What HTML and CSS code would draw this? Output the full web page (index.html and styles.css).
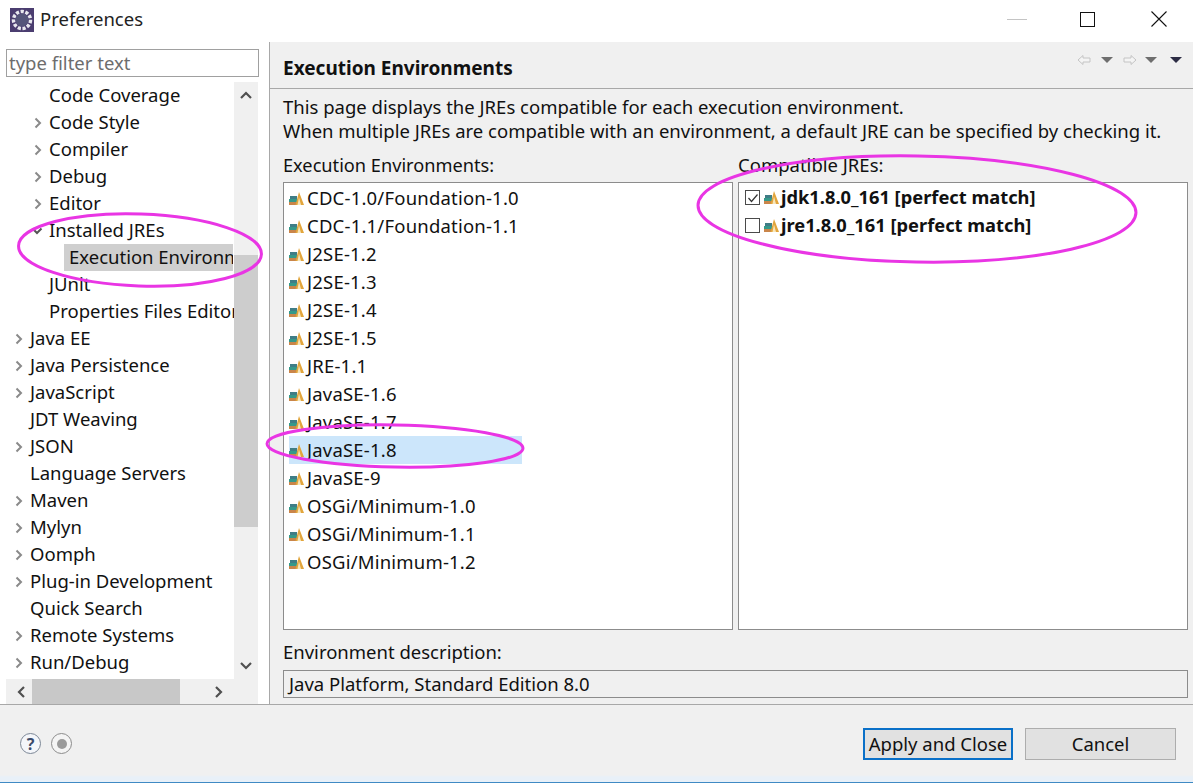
FILE: index.html
```html
<!DOCTYPE html>
<html lang="en">
<head>
<meta charset="utf-8">
<title>Preferences</title>
<link rel="stylesheet" href="styles.css">
</head>
<body>
<svg width="0" height="0" class="defs">
  <defs>
    <symbol id="jre" viewBox="0 0 15 13">
      <rect x="0" y="10" width="9" height="3" fill="#c9854a"/>
      <rect x="0" y="7" width="9" height="3" fill="#35998a"/>
      <rect x="1" y="4" width="7" height="3" fill="#3f7d86"/>
      <path d="M10 0 L15 13 H6.500 Z" fill="#e2a53c"/>
      <path d="M10 5.500 L12 13 H8.500 Z" fill="#f7e7bd"/>
    </symbol>
    <symbol id="chev-r" viewBox="0 0 8 12"><path d="M1.500 1.500 L6 6 L1.500 10.500" fill="none" stroke="#8a8a8a" stroke-width="2"/></symbol>
  </defs>
</svg>
<div class="window">
  <header class="titlebar">
    <svg class="app-icon" viewBox="0 0 24 24" width="24" height="24">
      <rect width="24" height="24" fill="#4b3d70"/>
      <circle cx="12" cy="12" r="8.500" fill="none" stroke="#e8e8ee" stroke-width="3.500" stroke-dasharray="3.200 1.600"/>
      <circle cx="12" cy="12" r="6.500" fill="#55557a"/>
    </svg>
    <span class="title">Preferences</span>
    <div class="win-controls">
      <span class="win-min"></span>
      <span class="win-max"></span>
      <svg class="win-close" viewBox="0 0 16 16" width="16" height="16"><path d="M0.500 0.500 L15.500 15.500 M15.500 0.500 L0.500 15.500" stroke="#111" stroke-width="1.100"/></svg>
    </div>
  </header>

  <div class="main">
    <aside class="sidebar">
      <input class="filter" type="text" placeholder="type filter text">
      <div class="tree-wrap">
        <div class="tree">
          <div class="row l1">Code Coverage</div>
          <div class="row l1 has"><svg class="chev"><use href="#chev-r"/></svg>Code Style</div>
          <div class="row l1 has"><svg class="chev"><use href="#chev-r"/></svg>Compiler</div>
          <div class="row l1 has"><svg class="chev"><use href="#chev-r"/></svg>Debug</div>
          <div class="row l1 has"><svg class="chev"><use href="#chev-r"/></svg>Editor</div>
          <div class="row l1 has"><svg class="chev open" viewBox="0 0 12 8"><path d="M1.500 1.500 L6 6 L10.500 1.500" fill="none" stroke="#555" stroke-width="2"/></svg>Installed JREs</div>
          <div class="row l2"><span class="sel">Execution Environments</span></div>
          <div class="row l1">JUnit</div>
          <div class="row l1">Properties Files Editor</div>
          <div class="row l0 has"><svg class="chev"><use href="#chev-r"/></svg>Java EE</div>
          <div class="row l0 has"><svg class="chev"><use href="#chev-r"/></svg>Java Persistence</div>
          <div class="row l0 has"><svg class="chev"><use href="#chev-r"/></svg>JavaScript</div>
          <div class="row l0">JDT Weaving</div>
          <div class="row l0 has"><svg class="chev"><use href="#chev-r"/></svg>JSON</div>
          <div class="row l0">Language Servers</div>
          <div class="row l0 has"><svg class="chev"><use href="#chev-r"/></svg>Maven</div>
          <div class="row l0 has"><svg class="chev"><use href="#chev-r"/></svg>Mylyn</div>
          <div class="row l0 has"><svg class="chev"><use href="#chev-r"/></svg>Oomph</div>
          <div class="row l0 has"><svg class="chev"><use href="#chev-r"/></svg>Plug-in Development</div>
          <div class="row l0">Quick Search</div>
          <div class="row l0 has"><svg class="chev"><use href="#chev-r"/></svg>Remote Systems</div>
          <div class="row l0 has"><svg class="chev"><use href="#chev-r"/></svg>Run/Debug</div>
        </div>
        <div class="vscroll">
          <svg class="sb-arrow" viewBox="0 0 12 8" width="12" height="8"><path d="M1 7 L6 2 L11 7" fill="none" stroke="#505050" stroke-width="2.200"/></svg>
          <div class="vtrack"><div class="vthumb"></div></div>
          <svg class="sb-arrow" viewBox="0 0 12 8" width="12" height="8"><path d="M1 1 L6 6 L11 1" fill="none" stroke="#505050" stroke-width="2.200"/></svg>
        </div>
      </div>
      <div class="hscroll">
        <svg class="sb-arrow-h" viewBox="0 0 8 12" width="8" height="12"><path d="M7 1 L2 6 L7 11" fill="none" stroke="#505050" stroke-width="2.200"/></svg>
        <div class="hthumb"></div>
        <svg class="sb-arrow-h right" viewBox="0 0 8 12" width="8" height="12"><path d="M1 1 L6 6 L1 11" fill="none" stroke="#505050" stroke-width="2.200"/></svg>
      </div>
    </aside>

    <section class="pane">
      <div class="pane-head">
        <h1>Execution Environments</h1>
        <div class="nav-icons">
          <svg viewBox="0 0 14 12" width="14" height="12"><path d="M1 6 L6 1.500 V4 H13 V8 H6 V10.500 Z" fill="#f4f4f4" stroke="#c4c4c4"/></svg>
          <span class="tri"></span>
          <svg viewBox="0 0 14 12" width="14" height="12"><path d="M13 6 L8 1.500 V4 H1 V8 H8 V10.500 Z" fill="#f4f4f4" stroke="#c4c4c4"/></svg>
          <span class="tri tight"></span>
          <span class="tri dark"></span>
        </div>
      </div>
      <div class="pane-body">
        <p class="desc">This page displays the JREs compatible for each execution environment.<br>When multiple JREs are compatible with an environment, a default JRE can be specified by checking it.</p>
        <div class="columns">
          <div class="col">
            <label class="lbl narrow">Execution Environments:</label>
            <ul class="list env">
              <li><svg class="jre"><use href="#jre"/></svg>CDC-1.0/Foundation-1.0</li>
              <li><svg class="jre"><use href="#jre"/></svg>CDC-1.1/Foundation-1.1</li>
              <li><svg class="jre"><use href="#jre"/></svg>J2SE-1.2</li>
              <li><svg class="jre"><use href="#jre"/></svg>J2SE-1.3</li>
              <li><svg class="jre"><use href="#jre"/></svg>J2SE-1.4</li>
              <li><svg class="jre"><use href="#jre"/></svg>J2SE-1.5</li>
              <li><svg class="jre"><use href="#jre"/></svg>JRE-1.1</li>
              <li><svg class="jre"><use href="#jre"/></svg>JavaSE-1.6</li>
              <li><svg class="jre"><use href="#jre"/></svg>JavaSE-1.7</li>
              <li class="current"><svg class="jre"><use href="#jre"/></svg>JavaSE-1.8</li>
              <li><svg class="jre"><use href="#jre"/></svg>JavaSE-9</li>
              <li><svg class="jre"><use href="#jre"/></svg>OSGi/Minimum-1.0</li>
              <li><svg class="jre"><use href="#jre"/></svg>OSGi/Minimum-1.1</li>
              <li><svg class="jre"><use href="#jre"/></svg>OSGi/Minimum-1.2</li>
            </ul>
          </div>
          <div class="col">
            <label class="lbl">Compatible JREs:</label>
            <ul class="list bold">
              <li><span class="check on"><svg viewBox="0 0 14 14" width="14" height="14"><path d="M2.500 7 L5.500 10.500 L11.500 3.500" fill="none" stroke="#333" stroke-width="1.200"/></svg></span><svg class="jre"><use href="#jre"/></svg>jdk1.8.0_161 [perfect match]</li>
              <li><span class="check"></span><svg class="jre"><use href="#jre"/></svg>jre1.8.0_161 [perfect match]</li>
            </ul>
          </div>
        </div>
        <label class="lbl env-lbl">Environment description:</label>
        <div class="env-field">Java Platform, Standard Edition 8.0</div>
      </div>
    </section>
  </div>

  <footer class="footer">
    <div class="help">
      <span class="round q">?</span>
      <span class="round rec"><span class="rec-dot"></span></span>
    </div>
    <div class="buttons">
      <button class="btn primary">Apply and Close</button>
      <button class="btn">Cancel</button>
    </div>
  </footer>

  <svg class="marks" viewBox="0 0 1193 784" width="1193" height="784">
    <ellipse cx="140" cy="250" rx="121.500" ry="36" transform="rotate(2 140 250)"/>
    <ellipse cx="395" cy="446" rx="128" ry="21" transform="rotate(1 395 446)"/>
    <ellipse cx="917" cy="209" rx="219" ry="53" transform="rotate(1 917 209)"/>
  </svg>
</div>
</body>
</html>
```
FILE: styles.css
```css
* { box-sizing: border-box; }
html, body { margin: 0; padding: 0; }
body { background: #fff; font-family: "Noto Sans", "Open Sans", sans-serif; font-size: 18.5px; color: #111; }
.defs { position: absolute; }
.window { position: relative; width: 1193px; height: 784px; overflow: hidden; display: flex; flex-direction: column; background: #fff; }

.titlebar { height: 42px; flex: none; display: flex; align-items: center; padding-left: 10px; background: #fff; }
.app-icon { margin-top: -2px; flex: none; }
.title { margin-left: 6px; margin-top: -6px; color: #222; }
.win-controls { margin-left: auto; display: flex; align-items: center; margin-top: -4px; }
.win-min { width: 20px; height: 1px; background: #c4c4c4; margin-right: 53px; }
.win-max { width: 15px; height: 15px; border: 1.5px solid #111; margin-right: 56px; }
.win-close { margin-right: 26px; }

.main { flex: 1; display: flex; min-height: 0; }
.sidebar { width: 270px; flex: none; border-right: 1px solid #a8a8a8; padding: 7px 10px 0 6px; display: flex; flex-direction: column; background: #fff; }
.filter { display: block; width: 253px; height: 28px; border: 1px solid #a0a0a0; padding: 0 2px 2px; font: inherit; background: #fff; color: #111; outline: none; }
.filter::placeholder { color: #6d6d6d; opacity: 1; }
.tree-wrap { margin-top: 5px; height: 597px; display: flex; width: 252px; }
.tree { width: 228px; overflow: hidden; flex: none; }
.row { height: 27px; line-height: 25px; white-space: nowrap; position: relative; color: #111; }
.l0 { padding-left: 24px; }
.l1 { padding-left: 43px; }
.l2 { padding-left: 58px; }
.sel { display: block; background: #cfcfcf; height: 27px; padding-left: 5px; width: 169px; overflow: hidden; }
.chev { position: absolute; top: 8px; width: 8px; height: 12px; }
.l0 .chev { left: 9px; }
.l1 .chev { left: 28px; }
.l1 .chev.open { left: 25px; top: 10px; width: 12px; height: 8px; }
.vscroll { width: 24px; flex: none; background: #f0f0f0; display: flex; flex-direction: column; align-items: center; }
.sb-arrow { flex: none; margin: 9px 0; }
.vtrack { flex: 1; width: 100%; padding-top: 147px; }
.vthumb { height: 272px; background: #cdcdcd; }
.hscroll { height: 25px; width: 252px; background: #f0f0f0; display: flex; align-items: center; position: relative; }
.sb-arrow-h { flex: none; margin-left: 11px; }
.sb-arrow-h.right { margin-left: 35px; }
.hthumb { width: 148px; height: 100%; background: #c8c8c8; margin-left: 7px; }

.pane { flex: 1; min-width: 0; background: #f0f0f0; display: flex; flex-direction: column; }
.pane-head { height: 47px; flex: none; border-bottom: 1px solid #a8a8a8; display: flex; align-items: flex-start; justify-content: space-between; padding: 13px 11px 0 13px; }
h1 { margin: 0; font-size: 19px; font-weight: 700; line-height: 27px; color: #111; }
.nav-icons { display: flex; align-items: center; gap: 10px; margin-top: -1px; height: 12px; }
.tri { width: 0; height: 0; border-left: 6px solid transparent; border-right: 6px solid transparent; border-top: 6px solid #6e6e6e; }
.tri.tight { margin-left: -2px; }
.tri.dark { border-top-color: #2c2c44; margin-left: 3px; }
.pane-body { flex: 1; padding: 6px 5px 6px 13px; display: flex; flex-direction: column; min-height: 0; }
.desc { margin: 0; line-height: 24px; color: #111; white-space: nowrap; }
.columns { display: flex; gap: 5px; margin-top: 10px; }
.col { width: 450px; flex: none; }
.lbl { display: block; line-height: 24px; color: #111; }
.lbl.narrow { font-size: 18.2px; }
.list { list-style: none; margin: 5px 0 0; padding: 1px 0 0 5px; height: 448px; background: #fff; border: 1px solid #8c8c8c; }
.list li { height: 28px; padding-bottom: 2px; display: flex; align-items: center; white-space: nowrap; width: 233px; }
.list.env li { letter-spacing: 0.2px; }
.list.bold { padding-left: 6px; font-size: 18.3px; }
.list.bold li { font-weight: 700; width: auto; padding-bottom: 4px; }
.list.bold .jre { margin-right: 2px; margin-top: 3px; }
.list.bold .check { margin-top: 3px; }
.list li.current { background: #cce6fb; }
.jre { width: 15px; height: 13px; flex: none; margin-right: 3px; margin-top: 2px; }
.check { width: 15px; height: 15px; border: 1px solid #4a4a4a; background: #fff; margin-right: 4px; margin-top: 1px; flex: none; display: block; line-height: 0; }
.env-lbl { margin-top: 10px; }
.env-field { height: 29px; margin-top: 6px; border: 1px solid #8c8c8c; line-height: 25px; padding-left: 5px; background: #f0f0f0; }

.footer { height: 79px; flex: none; border-top: 1px solid #a8a8a8; border-bottom: 1px solid #3f8ac4; background: linear-gradient(to bottom, #f0f0f0 70px, #e8f0f8 72px); display: flex; align-items: flex-start; justify-content: space-between; padding: 23px 17px 0 20px; margin-bottom: 1px; }
.help { display: flex; gap: 10px; margin-top: 5px; }
.round { width: 21px; height: 21px; border-radius: 50%; border: 1.3px solid #7c8796; display: flex; align-items: center; justify-content: center; }
.q { background: #f4f6fa; font-size: 16px; font-weight: 700; line-height: 18px; color: #3a4a6a; }
.rec { background: #f4f4f4; border-color: #8c8c8c; }
.rec-dot { width: 10px; height: 10px; border-radius: 50%; background: #9a9a9a; }
.buttons { display: flex; gap: 12px; }
.btn { width: 151px; height: 32px; padding: 0 0 2px; font: inherit; color: #111; background: #e1e1e1; border: 1px solid #adadad; }
.btn.primary { border: 2px solid #0a70c8; width: 150px; }

.marks { position: absolute; left: 0; top: 0; pointer-events: none; }
.marks ellipse { fill: none; stroke: #e935e4; stroke-width: 3; }
```
